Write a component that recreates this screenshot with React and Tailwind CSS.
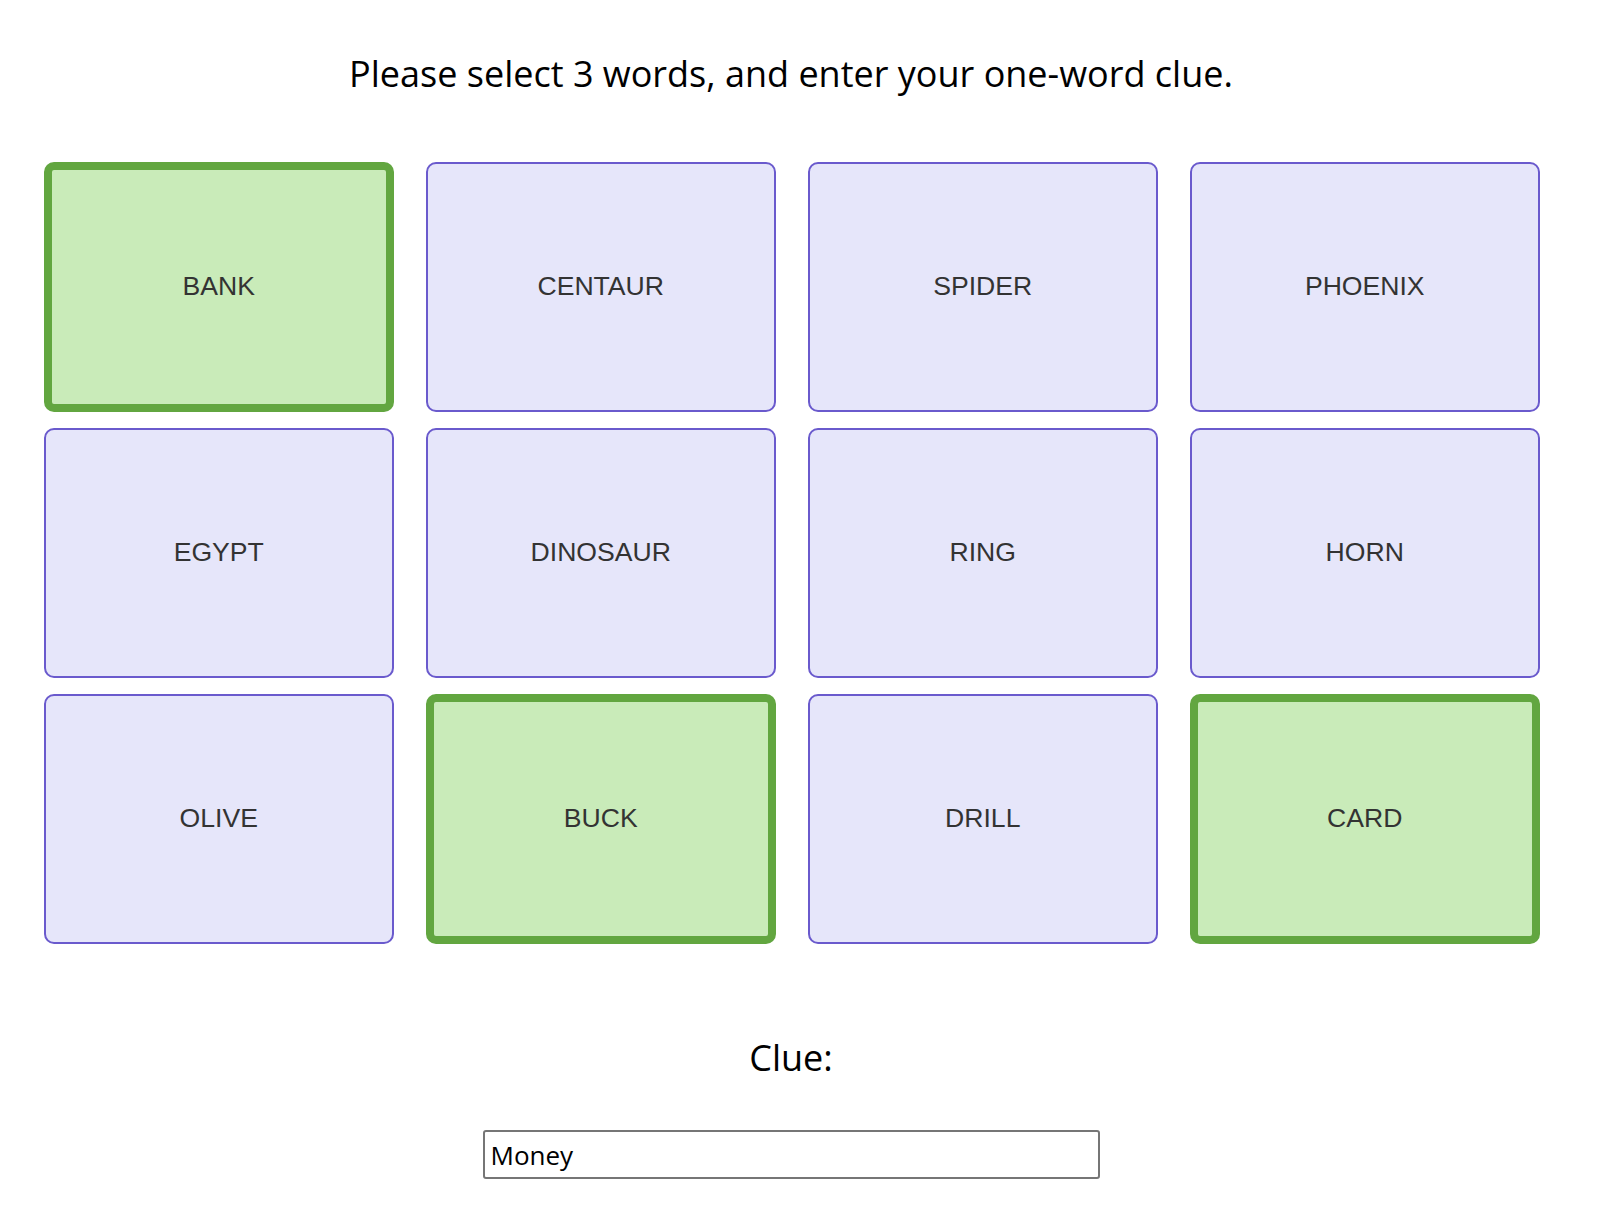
import { useState } from 'react';

const WORDS = [
  'BANK', 'CENTAUR', 'SPIDER', 'PHOENIX',
  'EGYPT', 'DINOSAUR', 'RING', 'HORN',
  'OLIVE', 'BUCK', 'DRILL', 'CARD',
];

const App = () => {
  const [selected, setSelected] = useState(['BANK', 'BUCK', 'CARD']);
  const [clue, setClue] = useState('Money');

  const toggle = (word) => {
    if (selected.includes(word)) {
      setSelected(selected.filter((w) => w !== word));
    } else if (selected.length < 3) {
      setSelected([...selected, word]);
    }
  };

  return (
    <div className="w-[1582px] bg-white pb-[39px] font-['Open_Sans',sans-serif] text-black">
      <h1 className="pt-[49px] text-center text-[36px] leading-[49px] font-normal">
        Please select 3 words, and enter your one-word clue.
      </h1>

      <div className="mt-[64px] ml-[44px] grid grid-cols-[repeat(4,349.5px)] gap-x-[32.5px] gap-y-[16px]">
        {WORDS.map((word) => {
          const isOn = selected.includes(word);
          return (
            <button
              key={word}
              onClick={() => toggle(word)}
              className={`flex h-[250px] items-center justify-center rounded-[10px] font-['Liberation_Sans',Arial,sans-serif] text-[26.6px] text-[#333333] ${
                isOn
                  ? 'border-[8px] border-[#62a640] bg-[#c9ebb9]'
                  : 'border-2 border-[#6a5acd] bg-[#e6e6fa]'
              }`}
            >
              {word}
            </button>
          );
        })}
      </div>

      <div className="mt-[89px] text-center text-[36px] leading-[49px]">Clue:</div>

      <div className="mt-[48px] flex justify-center">
        <input
          type="text"
          value={clue}
          onChange={(e) => setClue(e.target.value)}
          className="h-[49px] w-[617px] rounded-[3px] border-2 border-[#767676] bg-white px-[6px] font-['Open_Sans',sans-serif] text-[26px] text-black outline-none"
        />
      </div>
    </div>
  );
};

export default App;
